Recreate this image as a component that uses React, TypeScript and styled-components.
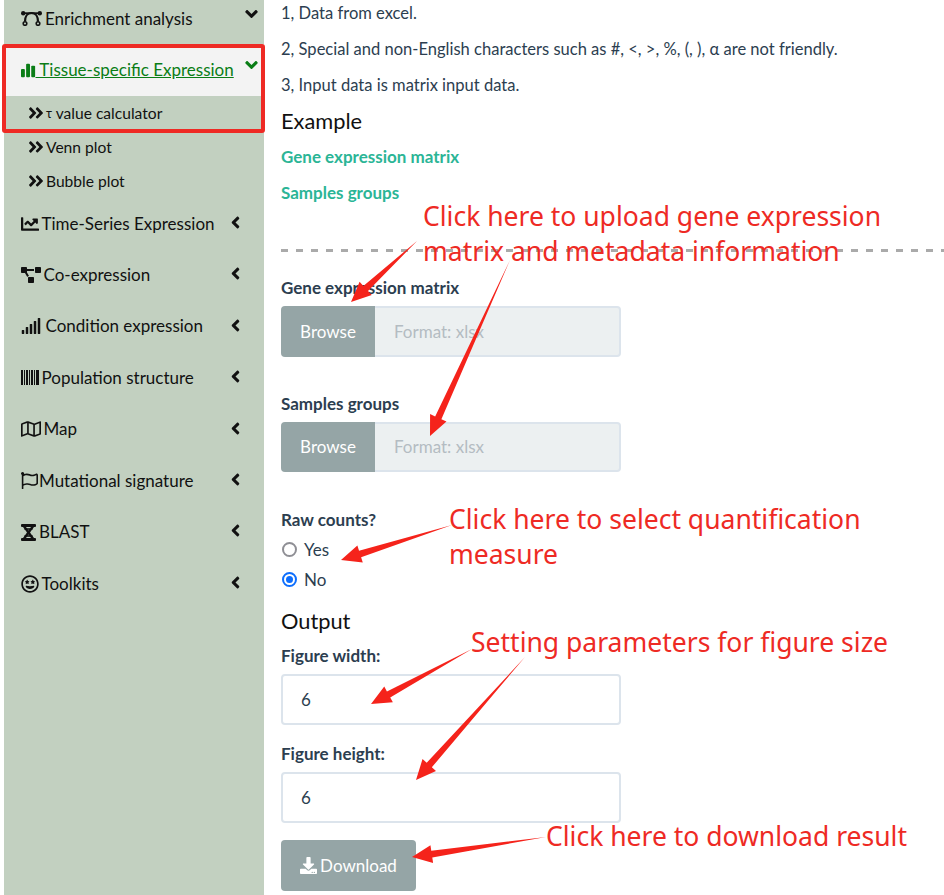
import React from "react";
import styled, { createGlobalStyle } from "styled-components";
import {
  FaAngleDoubleRight, FaAngleDown, FaAngleLeft, FaChartLine, FaProjectDiagram,
  FaSignal, FaRegMap, FaRegFlag, FaRegGrinStars, FaDownload,
} from "react-icons/fa";

const Global = createGlobalStyle`
  html, body { margin: 0; padding: 0; background: #fff; }
  body { font-family: Lato, "Liberation Sans", sans-serif; color: #2c3e50; }
  * { box-sizing: border-box; }
`;

const Page = styled.div`
  position: relative;
  width: 944px;
  height: 895px;
  overflow: hidden;
  display: flex;
`;

const Sidebar = styled.nav`
  width: 260px;
  margin-left: 4px;
  height: 895px;
  background: #c2d0c0;
  flex: none;
`;

const NavList = styled.div`
  margin-top: -7px;
`;

const NavRow = styled.div<{ $active?: boolean }>`
  height: 51.43px;
  display: flex;
  align-items: center;
  padding-left: 17px;
  font-size: 17px;
  line-height: 20px;
  position: relative;
  color: ${(p) => (p.$active ? "#0a7d16" : "#111")};
  background: ${(p) => (p.$active ? "#f3f3f3" : "transparent")};
  text-decoration: ${(p) => (p.$active ? "underline" : "none")};
  white-space: pre;
`;

const Lead = styled.span<{ $w: number }>`
  flex: none;
  width: ${(p) => p.$w}px;
  display: flex;
  align-items: center;
`;

const Caret = styled.span<{ $open?: boolean }>`
  position: absolute;
  left: ${(p) => (p.$open ? "239px" : "224px")};
  top: ${(p) => (p.$open ? "11px" : "15px")};
  display: flex;
  svg { width: ${(p) => (p.$open ? "17px" : "15px")}; height: ${(p) => (p.$open ? "20px" : "19px")}; }
`;

const SubRow = styled.div`
  height: 34px;
  display: flex;
  align-items: center;
  padding-left: 23px;
  font-size: 15.6px;
  color: #111;
  svg { flex: none; margin-right: 1px; }
`;

const Main = styled.main`
  flex: 1;
  padding: 1px 0 0 17px;
  min-width: 0;
`;

const Para = styled.p`
  margin: 0 0 12px;
  font-size: 16.55px;
  line-height: 24px;
`;

const Heading = styled.h4<{ $mb?: number }>`
  margin: 0 0 ${(p) => p.$mb ?? 12}px;
  font-size: 21.8px;
  line-height: 24px;
  font-weight: 400;
  color: #111;
`;

const TealLink = styled.p`
  margin: 0 0 12px;
  font-size: 17px;
  line-height: 24px;
  font-weight: 700;
  color: #2bb596;
`;

const Dashed = styled.div`
  height: 3px;
  margin: 44px 0 26px;
  background: repeating-linear-gradient(90deg, #aaa 0 7px, transparent 7px 15px);
`;

const Field = styled.div<{ $mb?: number }>`
  width: 340px;
  margin-bottom: ${(p) => p.$mb ?? 37}px;
`;

const Label = styled.label<{ $mb?: number }>`
  display: block;
  font-size: 17px;
  line-height: 20px;
  font-weight: 700;
  margin-bottom: ${(p) => p.$mb ?? 8}px;
`;

const FileGroup = styled.div`
  display: flex;
  height: 50.5px;
`;

const Browse = styled.span`
  width: 94px;
  background: #95a5a6;
  color: #fff;
  font-size: 17px;
  display: flex;
  align-items: center;
  justify-content: center;
  border-radius: 4px 0 0 4px;
`;

const FileName = styled.span`
  flex: 1;
  background: #ecf0f1;
  border: 2px solid #dce4ec;
  border-left: 0;
  border-radius: 0 4px 4px 0;
  color: #b4bcc2;
  font-size: 17px;
  display: flex;
  align-items: center;
  padding-left: 19px;
`;

const RadioRow = styled.div`
  display: flex;
  align-items: center;
  height: 30.5px;
  font-size: 17px;
  gap: 7px;
  padding-left: 1px;
`;

const Radio = styled.span<{ $checked?: boolean }>`
  width: 15px;
  height: 15px;
  border-radius: 50%;
  border: ${(p) => (p.$checked ? "2px solid #0d6efd" : "2px solid #8f8f95")};
  background: #fff;
  display: flex;
  align-items: center;
  justify-content: center;
  &::after {
    content: "";
    width: 7px;
    height: 7px;
    border-radius: 50%;
    background: ${(p) => (p.$checked ? "#0d6efd" : "transparent")};
  }
`;

const TextBox = styled.div`
  height: 50.5px;
  border: 2px solid #dce4ec;
  border-radius: 4px;
  background: #fff;
  display: flex;
  align-items: center;
  padding-left: 18px;
  font-size: 17px;
`;

const DownloadButton = styled.button`
  width: 135px;
  height: 51px;
  background: #95a5a6;
  border: 0;
  border-radius: 4px;
  color: #fff;
  font: 400 17px Lato, sans-serif;
  display: flex;
  align-items: center;
  justify-content: center;
  gap: 3px;
`;

const Note = styled.div<{ $x: number; $y: number }>`
  position: absolute;
  left: ${(p) => p.$x}px;
  top: ${(p) => p.$y}px;
  color: #ee2a24;
  font-family: "Noto Sans", sans-serif;
  font-size: 26.5px;
  line-height: 35px;
  white-space: pre;
`;

const Overlay = styled.svg`
  position: absolute;
  left: 0;
  top: 0;
  pointer-events: none;
`;

const Highlight = styled.div`
  position: absolute;
  left: 2px;
  top: 44px;
  width: 263px;
  height: 89px;
  border: 4px solid #ee2a24;
  border-radius: 3px;
  pointer-events: none;
`;

const TaxLetter = styled.span`
  font-size: 13px;
`;

function BezierIcon() {
  return (
    <svg width="21" height="15" viewBox="0 0 21 15" fill="none" stroke="currentColor">
      <path d="M2 2.2H19" strokeWidth="1.8" />
      <path d="M10.5 2C6 2 4 6 4 10.5M10.5 2C15 2 17 6 17 10.5" strokeWidth="2.2" />
      <circle cx="2.2" cy="2.2" r="2.2" fill="currentColor" stroke="none" />
      <circle cx="18.8" cy="2.2" r="2.2" fill="currentColor" stroke="none" />
      <circle cx="4" cy="12.5" r="1.8" strokeWidth="1.6" />
      <circle cx="17" cy="12.5" r="1.8" strokeWidth="1.6" />
    </svg>
  );
}

function TissueIcon() {
  return (
    <svg width="15" height="16" viewBox="0 0 15 16" fill="currentColor">
      <rect x="0" y="7" width="4" height="8.5" rx="1" />
      <rect x="5.3" y="1.5" width="4" height="14" rx="1" />
      <rect x="10.6" y="3.5" width="4" height="12" rx="1" />
    </svg>
  );
}

function BarcodeIcon() {
  const bars = [[0, 2], [3, 1], [5, 2], [8, 1], [10, 2], [13, 1], [15, 3]];
  return (
    <svg width="18" height="15" viewBox="0 0 18 15" fill="currentColor">
      {bars.map(([x, w]) => <rect key={x} x={x} y="0" width={w} height="15" />)}
    </svg>
  );
}

function HelixIcon() {
  return (
    <svg width="15" height="17" viewBox="0 0 15 17" fill="currentColor">
      <rect x="0" y="0" width="15" height="3" rx="1" />
      <rect x="0" y="14" width="15" height="3" rx="1" />
      <path d="M2 3H5L13 14H10Z" />
      <path d="M13 3H10L2 14H5Z" />
      <rect x="3.5" y="4.2" width="8" height="1.6" />
      <rect x="3.5" y="11.2" width="8" height="1.6" />
    </svg>
  );
}

function Arrow({ from, to, w = 9 }: { from: [number, number]; to: [number, number]; w?: number }) {
  const dx = to[0] - from[0];
  const dy = to[1] - from[1];
  const len = Math.hypot(dx, dy);
  const ux = dx / len;
  const uy = dy / len;
  const nx = -uy;
  const ny = ux;
  const head = 20;
  const bx = to[0] - ux * head;
  const by = to[1] - uy * head;
  const neck = w * 0.38;
  const pts = [
    from,
    [bx + nx * neck, by + ny * neck],
    [bx + nx * w, by + ny * w],
    to,
    [bx - nx * w, by - ny * w],
    [bx - nx * neck, by - ny * neck],
  ];
  return <polygon points={pts.map((p) => p.join(",")).join(" ")} fill="#f5231b" />;
}

const items: [number, React.ReactNode, string][] = [
  [20.5, <FaChartLine size={18} key="a" />, "Time-Series Expression"],
  [22.5, <FaProjectDiagram size={20} key="b" />, "Co-expression"],
  [24.5, <FaSignal size={20} key="c" />, "Condition expression"],
  [20.5, <BarcodeIcon key="d" />, "Population structure"],
  [22.5, <FaRegMap size={20} key="e" />, "Map"],
  [18, <FaRegFlag size={17} key="f" />, "Mutational signature"],
  [18, <HelixIcon key="g" />, "BLAST"],
  [20.5, <FaRegGrinStars size={18} key="h" />, "Toolkits"],
];

export default function App() {
  return (
    <Page>
      <Global />
      <Sidebar>
        <NavList>
          <NavRow>
            <Lead $w={24}><BezierIcon /></Lead>
            Enrichment analysis
            <Caret $open><FaAngleDown /></Caret>
          </NavRow>
          <NavRow $active>
            <Lead $w={14.5}><TissueIcon /></Lead>
            {" Tissue-specific Expression"}
            <Caret $open><FaAngleDown /></Caret>
          </NavRow>
          <div>
            <SubRow><FaAngleDoubleRight size={18} /><TaxLetter>τ</TaxLetter>&nbsp;value calculator</SubRow>
            <SubRow><FaAngleDoubleRight size={18} />Venn plot</SubRow>
            <SubRow><FaAngleDoubleRight size={18} />Bubble plot</SubRow>
          </div>
          {items.map(([w, icon, label]) => (
            <NavRow key={label}>
              <Lead $w={w}>{icon}</Lead>
              {label}
              <Caret><FaAngleLeft /></Caret>
            </NavRow>
          ))}
        </NavList>
      </Sidebar>
      <Main>
        <Para>1, Data from excel.</Para>
        <Para>2, Special and non-English characters such as #, &lt;, &gt;, %, (, ), α are not friendly.</Para>
        <Para>3, Input data is matrix input data.</Para>
        <Heading>Example</Heading>
        <TealLink>Gene expression matrix</TealLink>
        <TealLink>Samples groups</TealLink>
        <Dashed />
        <Field>
          <Label>Gene expression matrix</Label>
          <FileGroup><Browse>Browse</Browse><FileName>Format: xlsx</FileName></FileGroup>
        </Field>
        <Field $mb={38}>
          <Label>Samples groups</Label>
          <FileGroup><Browse>Browse</Browse><FileName>Format: xlsx</FileName></FileGroup>
        </Field>
        <Field $mb={14}>
          <Label $mb={4}>Raw counts?</Label>
          <RadioRow><Radio />Yes</RadioRow>
          <RadioRow><Radio $checked />No</RadioRow>
        </Field>
        <Heading $mb={13}>Output</Heading>
        <Field $mb={19.5}>
          <Label>Figure width:</Label>
          <TextBox>6</TextBox>
        </Field>
        <Field $mb={17}>
          <Label>Figure height:</Label>
          <TextBox>6</TextBox>
        </Field>
        <DownloadButton><FaDownload size={17} />Download</DownloadButton>
      </Main>
      <Highlight />
      <Overlay width="944" height="895">
        <Arrow from={[417, 241]} to={[351, 302]} />
        <Arrow from={[510, 260]} to={[430, 436]} />
        <Arrow from={[452, 525]} to={[341, 560]} />
        <Arrow from={[472, 649]} to={[371, 704]} />
        <Arrow from={[525, 657]} to={[416, 780]} />
        <Arrow from={[546, 837]} to={[412, 857]} />
      </Overlay>
      <Note $x={423} $y={199}>{"Click here to upload gene expression\nmatrix and metadata information"}</Note>
      <Note $x={449} $y={502}>{"Click here to select quantification\nmeasure"}</Note>
      <Note $x={471} $y={625}>Setting parameters for figure size</Note>
      <Note $x={546} $y={819}>Click here to download result</Note>
    </Page>
  );
}
